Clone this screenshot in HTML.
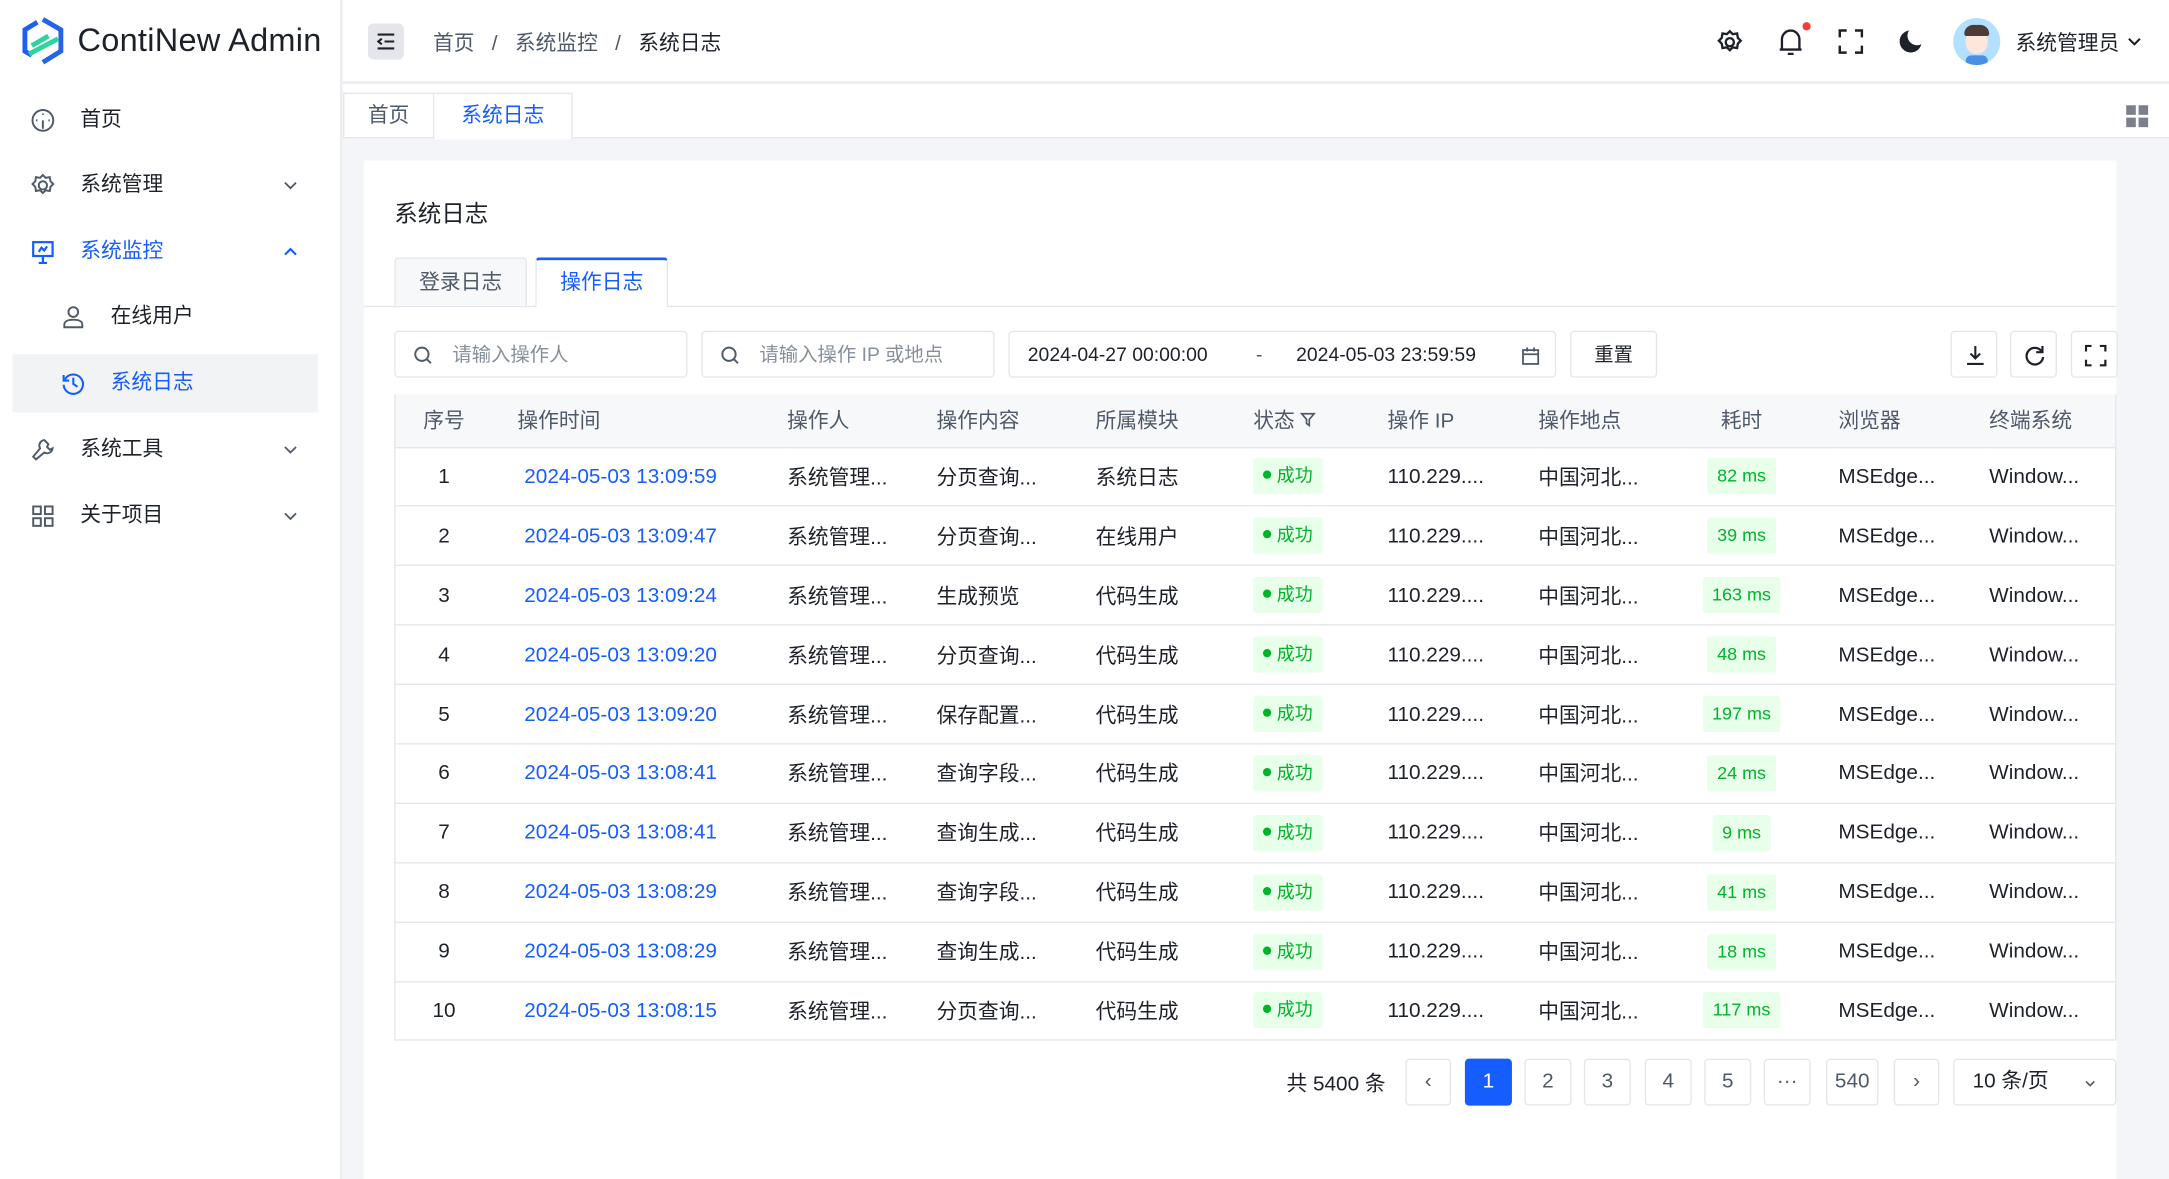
<!DOCTYPE html>
<html><head><meta charset="utf-8">
<style>
*{box-sizing:border-box;margin:0;padding:0}
html,body{width:2169px;height:1179px;overflow:hidden;background:#fff}
body{font-family:"Liberation Sans","Noto Sans CJK SC",sans-serif;color:#1d2129}
#w{position:absolute;left:0;top:0;width:1568px;height:852px;transform:scale(1.38329,1.3838);transform-origin:0 0;background:#f4f5f9;overflow:hidden}
.a{position:absolute}
.side{left:0;top:0;width:247px;height:852px;background:#fff;border-right:1px solid #e5e6eb}
.mi{position:absolute;left:9px;width:221px;height:42px;font-size:15px;color:#1d2129;line-height:42px}
.mi .t{position:absolute;left:49px}
.mi svg{position:absolute;left:13px;top:12px}
.mi svg.ch{left:auto;right:14px;top:15px}
.hdr{left:248px;top:0;width:1320px;height:60px;background:#fff;border-bottom:1px solid #e5e6eb}
.tabs{left:248px;top:61px;width:1320px;height:39px;background:#fff;border-bottom:1px solid #e5e6eb}
.card{left:263px;top:116px;width:1267px;height:740px;background:#fff}
.inp{position:absolute;top:239px;height:34px;border:1px solid #e5e6eb;border-radius:3px;font-size:14px;line-height:32px;background:#fff}
.btn{position:absolute;top:239px;width:34px;height:34px;border:1px solid #e5e6eb;border-radius:3px;background:#fff}
.btn svg{position:absolute;left:9px;top:9px}
table{position:absolute;left:285px;top:285px;width:1245px;border-collapse:collapse;font-size:15px}
th{height:38px;background:#f7f8fa;font-weight:normal;color:#4e5969;text-align:left;border-bottom:1px solid #e5e6eb}
td{height:42.9px;border-bottom:1px solid #e5e6eb;white-space:nowrap}
tr td:first-child,tr th:first-child{text-align:center}
.bl{color:#165dff}
.tag{display:inline-block;background:#e8ffea;color:#00b42a;font-size:13px;height:26px;line-height:26px;padding:0 7px;border-radius:2px}
.tag i{display:inline-block;width:6px;height:6px;border-radius:50%;background:#00b42a;margin-right:4px;vertical-align:2px}
.pg{position:absolute;top:765px;height:34px;border:1px solid #e5e6eb;border-radius:3px;text-align:center;line-height:32px;font-size:15px;color:#4e5969;background:#fff}
</style></head><body>
<div id="w">
<div class="a side">
  <svg class="a" style="left:15px;top:12px" width="32" height="36" viewBox="0 0 32 36"><path d="M16 2 L29 9.5 V25 L16 33" fill="none" stroke="#2563eb" stroke-width="3.5"/><path d="M12 4 L3 9.5 V25 L8 28" fill="none" stroke="#1e5ef0" stroke-width="3.5"/><path d="M6 27 L27 16" stroke="#2dd4a0" stroke-width="3.5"/><path d="M8 21 L20 14" stroke="#2dd4a0" stroke-width="3.5"/></svg>
  <div class="a" style="left:56px;top:16px;font-size:23.5px;color:#1d2129;letter-spacing:0.2px">ContiNew Admin</div>
  <div class="mi" style="top:66px"><svg width="18" height="18" viewBox="0 0 18 18" fill="none" stroke="#4e5969" stroke-width="1.4"><circle cx="9" cy="9" r="7.5"/><path d="M9 9 L9 15 M9 4v1 M4 9h1 M13 9h1"/></svg><span class="t">首页</span></div>
  <div class="mi" style="top:113px"><svg width="18" height="18" viewBox="0 0 18 18" fill="none" stroke="#4e5969" stroke-width="1.4"><circle cx="9" cy="9" r="3"/><path d="M9 1.5l2 2 3 -.5.5 3 2 2-2 2-.5 3-3-.5-2 2-2-2-3 .5-.5-3-2-2 2-2 .5-3 3 .5z"/></svg><span class="t">系统管理</span><svg class="ch" width="12" height="12" viewBox="0 0 12 12"><path d="M2 4l4 4 4-4" fill="none" stroke="#4e5969" stroke-width="1.3"/></svg></div>
  <div class="mi" style="top:161px;color:#165dff"><svg width="18" height="18" viewBox="0 0 18 18" fill="none" stroke="#165dff" stroke-width="1.6"><rect x="2" y="2" width="14" height="10"/><path d="M9 12v5M6 17h6M6 9l2-3 2 2 2-3"/></svg><span class="t">系统监控</span><svg class="ch" width="12" height="12" viewBox="0 0 12 12"><path d="M2 8l4-4 4 4" fill="none" stroke="#165dff" stroke-width="1.5"/></svg></div>
  <div class="mi" style="top:208px"><svg style="left:35px" width="18" height="18" viewBox="0 0 18 18" fill="none" stroke="#4e5969" stroke-width="1.4"><circle cx="9" cy="5.5" r="3.5"/><path d="M2.5 16.5v-2c0-2 2-3.5 6.5-3.5s6.5 1.5 6.5 3.5v2z"/></svg><span class="t" style="left:71px">在线用户</span></div>
  <div class="mi" style="top:256px;background:#f2f3f5;color:#165dff"><svg style="left:35px" width="18" height="18" viewBox="0 0 18 18" fill="none" stroke="#165dff" stroke-width="1.5"><path d="M3 6a7 7 0 1 1 -1 4"/><path d="M2 3v4h4"/><path d="M9 5v4.5l3 2"/></svg><span class="t" style="left:71px">系统日志</span></div>
  <div class="mi" style="top:304px"><svg width="18" height="18" viewBox="0 0 18 18" fill="none" stroke="#4e5969" stroke-width="1.4"><path d="M10 2a4 4 0 0 0 -3 6l-5 6 2 2 6-5a4 4 0 0 0 6-3l-2 1-2-2 1-2z"/></svg><span class="t">系统工具</span><svg class="ch" width="12" height="12" viewBox="0 0 12 12"><path d="M2 4l4 4 4-4" fill="none" stroke="#4e5969" stroke-width="1.3"/></svg></div>
  <div class="mi" style="top:352px"><svg width="18" height="18" viewBox="0 0 18 18" fill="none" stroke="#4e5969" stroke-width="1.4"><rect x="2" y="2" width="5.5" height="5.5"/><rect x="10.5" y="2" width="5.5" height="5.5"/><rect x="2" y="10.5" width="5.5" height="5.5"/><rect x="10.5" y="10.5" width="5.5" height="5.5"/></svg><span class="t">关于项目</span><svg class="ch" width="12" height="12" viewBox="0 0 12 12"><path d="M2 4l4 4 4-4" fill="none" stroke="#4e5969" stroke-width="1.3"/></svg></div>
</div>
<div class="a hdr">
  <div class="a" style="left:18px;top:17px;width:26px;height:26px;background:#e5e6eb;border-radius:4px"><svg style="position:absolute;left:6px;top:7px" width="14" height="12" viewBox="0 0 14 12" fill="none" stroke="#1d2129" stroke-width="1.5"><path d="M1 1h12M6 6h7M1 11h12M4 4L1.5 6 4 8"/></svg></div>
  <div class="a" style="left:65px;top:20px;font-size:15px;color:#4e5969">首页&nbsp;&nbsp;&nbsp;/&nbsp;&nbsp;&nbsp;系统监控&nbsp;&nbsp;&nbsp;/&nbsp;&nbsp;&nbsp;<span style="color:#1d2129">系统日志</span></div>
  <svg class="a" style="left:993px;top:21px" width="19" height="19" viewBox="0 0 18 18" fill="none" stroke="#1d2129" stroke-width="1.6"><circle cx="9" cy="9" r="2.8"/><path d="M9 1.5l2 2 3 -.5.5 3 2 2-2 2-.5 3-3-.5-2 2-2-2-3 .5-.5-3-2-2 2-2 .5-3 3 .5z"/></svg>
  <svg class="a" style="left:1037px;top:20px" width="19" height="20" viewBox="0 0 18 19" fill="none" stroke="#1d2129" stroke-width="1.6"><path d="M3 15V8a6 6 0 0 1 12 0v7M1.5 15h15M7 18h4"/></svg>
  <div class="a" style="left:1055px;top:16px;width:6px;height:6px;border-radius:50%;background:#f53f3f"></div>
  <svg class="a" style="left:1081px;top:21px" width="18" height="18" viewBox="0 0 18 18" fill="none" stroke="#1d2129" stroke-width="1.8"><path d="M1 6V1h5M12 1h5v5M17 12v5h-5M6 17H1v-5"/></svg>
  <svg class="a" style="left:1124px;top:21px" width="18" height="18" viewBox="0 0 18 18"><path d="M8 1a8 8 0 1 0 9 10A7 7 0 0 1 8 1z" fill="#1d2129"/></svg>
  <div class="a" style="left:1164px;top:13px;width:34px;height:34px;border-radius:50%;background:#b3e0ff;overflow:hidden"><div style="position:absolute;left:9px;top:8px;width:16px;height:18px;border-radius:8px;background:#fde7dc"></div><div style="position:absolute;left:8px;top:5px;width:18px;height:8px;border-radius:8px 8px 2px 2px;background:#4d3a3a"></div><div style="position:absolute;left:9px;top:27px;width:16px;height:8px;background:#4a90e2;border-radius:4px"></div></div>
  <div class="a" style="left:1209px;top:20px;font-size:15px">系统管理员</div>
  <svg class="a" style="left:1289px;top:24px" width="12" height="12" viewBox="0 0 12 12"><path d="M2 4l4 4 4-4" fill="none" stroke="#1d2129" stroke-width="1.5"/></svg>
</div>
<div class="a tabs">
  <div class="a" style="left:0;top:6px;width:66px;height:33px;border:1px solid #e5e6eb;border-bottom:0;font-size:15px;text-align:center;line-height:32px;color:#4e5969">首页</div>
  <div class="a" style="left:66px;top:6px;width:100px;height:34px;border:1px solid #e5e6eb;border-bottom:0;border-left:0;font-size:15px;text-align:center;line-height:32px;color:#165dff;background:#fff">系统日志</div>
  <svg class="a" style="left:1289px;top:15px" width="16" height="16" viewBox="0 0 16 16" fill="#7a808c"><rect x="0" y="0" width="7" height="7"/><rect x="9" y="0" width="7" height="7"/><rect x="0" y="9" width="7" height="7"/><rect x="9" y="9" width="7" height="7"/></svg>
</div>
<div class="a card"></div>
<div class="a" style="left:285px;top:140px;font-size:17px">系统日志</div>
<div class="a" style="left:263px;top:221px;width:1267px;height:1px;background:#e5e6eb"></div>
<div class="a" style="left:285px;top:186px;width:96px;height:35px;background:#f7f8fa;border:1px solid #e5e6eb;border-bottom:0;border-radius:3px 3px 0 0;text-align:center;line-height:36px;font-size:15px;color:#4e5969">登录日志</div>
<div class="a" style="left:387px;top:186px;width:96px;height:36px;background:#fff;border:1px solid #e5e6eb;border-top:2px solid #165dff;border-bottom:0;border-radius:3px 3px 0 0;text-align:center;line-height:34px;font-size:15px;color:#165dff">操作日志</div>
<div class="inp" style="left:285px;width:212px;color:#86909c"><svg class="a" style="left:13px;top:10px" width="14" height="14" viewBox="0 0 14 14" fill="none" stroke="#4e5969" stroke-width="1.4"><circle cx="6" cy="6" r="4.8"/><path d="M9.5 9.5l3 3"/></svg><span class="a" style="left:41px">请输入操作人</span></div>
<div class="inp" style="left:507px;width:212px;color:#86909c"><svg class="a" style="left:13px;top:10px" width="14" height="14" viewBox="0 0 14 14" fill="none" stroke="#4e5969" stroke-width="1.4"><circle cx="6" cy="6" r="4.8"/><path d="M9.5 9.5l3 3"/></svg><span class="a" style="left:41px">请输入操作 IP 或地点</span></div>
<div class="inp" style="left:729px;width:396px"><span class="a" style="left:13px">2024-04-27 00:00:00</span><span class="a" style="left:178px;color:#4e5969">-</span><span class="a" style="left:207px">2024-05-03 23:59:59</span><svg class="a" style="left:370px;top:11px" width="13" height="13" viewBox="0 0 13 13" fill="none" stroke="#4e5969" stroke-width="1.3"><rect x="1" y="2" width="11" height="10"/><path d="M1 5h11M4 0v3M9 0v3"/></svg></div>
<div class="inp" style="left:1135px;width:63px;text-align:center">重置</div>
<div class="btn" style="left:1410px"><svg width="16" height="16" viewBox="0 0 16 16" fill="none" stroke="#1d2129" stroke-width="1.5"><path d="M8 1v9M4.5 6.5L8 10l3.5-3.5M2 14h12"/></svg></div>
<div class="btn" style="left:1453px"><svg width="16" height="16" viewBox="0 0 16 16" fill="none" stroke="#1d2129" stroke-width="1.6"><path d="M13 5a6 6 0 1 0 1 4"/><path d="M13.5 1v4.5H9"/></svg></div>
<div class="btn" style="left:1497px"><svg width="16" height="16" viewBox="0 0 16 16" fill="none" stroke="#1d2129" stroke-width="1.6"><path d="M1 5V1h4M11 1h4v4M15 11v4h-4M5 15H1v-4"/></svg></div>
<table>
<colgroup><col style="width:72px"><col style="width:212px"><col style="width:108px"><col style="width:115px"><col style="width:114px"><col style="width:97px"><col style="width:109px"><col style="width:107px"><col style="width:110px"><col style="width:109px"><col></colgroup>
<tr><th>序号</th><th style="padding-left:17px">操作时间</th><th>操作人</th><th>操作内容</th><th>所属模块</th><th>状态 <svg width="11" height="11" viewBox="0 0 11 11" fill="none" stroke="#4e5969" stroke-width="1.2"><path d="M1 1h9L6.5 5v4.5L4.5 8V5z"/></svg></th><th>操作 IP</th><th>操作地点</th><th style="text-align:center;padding-right:30px">耗时</th><th>浏览器</th><th>终端系统</th></tr>
<tr><td>1</td><td class="bl" style="padding-left:22px">2024-05-03 13:09:59</td><td>系统管理...</td><td>分页查询...</td><td>系统日志</td><td><span class="tag"><i></i>成功</span></td><td>110.229....</td><td>中国河北...</td><td style="text-align:center;padding-right:30px"><span class="tag">82 ms</span></td><td>MSEdge...</td><td>Window...</td></tr>
<tr><td>2</td><td class="bl" style="padding-left:22px">2024-05-03 13:09:47</td><td>系统管理...</td><td>分页查询...</td><td>在线用户</td><td><span class="tag"><i></i>成功</span></td><td>110.229....</td><td>中国河北...</td><td style="text-align:center;padding-right:30px"><span class="tag">39 ms</span></td><td>MSEdge...</td><td>Window...</td></tr>
<tr><td>3</td><td class="bl" style="padding-left:22px">2024-05-03 13:09:24</td><td>系统管理...</td><td>生成预览</td><td>代码生成</td><td><span class="tag"><i></i>成功</span></td><td>110.229....</td><td>中国河北...</td><td style="text-align:center;padding-right:30px"><span class="tag">163 ms</span></td><td>MSEdge...</td><td>Window...</td></tr>
<tr><td>4</td><td class="bl" style="padding-left:22px">2024-05-03 13:09:20</td><td>系统管理...</td><td>分页查询...</td><td>代码生成</td><td><span class="tag"><i></i>成功</span></td><td>110.229....</td><td>中国河北...</td><td style="text-align:center;padding-right:30px"><span class="tag">48 ms</span></td><td>MSEdge...</td><td>Window...</td></tr>
<tr><td>5</td><td class="bl" style="padding-left:22px">2024-05-03 13:09:20</td><td>系统管理...</td><td>保存配置...</td><td>代码生成</td><td><span class="tag"><i></i>成功</span></td><td>110.229....</td><td>中国河北...</td><td style="text-align:center;padding-right:30px"><span class="tag">197 ms</span></td><td>MSEdge...</td><td>Window...</td></tr>
<tr><td>6</td><td class="bl" style="padding-left:22px">2024-05-03 13:08:41</td><td>系统管理...</td><td>查询字段...</td><td>代码生成</td><td><span class="tag"><i></i>成功</span></td><td>110.229....</td><td>中国河北...</td><td style="text-align:center;padding-right:30px"><span class="tag">24 ms</span></td><td>MSEdge...</td><td>Window...</td></tr>
<tr><td>7</td><td class="bl" style="padding-left:22px">2024-05-03 13:08:41</td><td>系统管理...</td><td>查询生成...</td><td>代码生成</td><td><span class="tag"><i></i>成功</span></td><td>110.229....</td><td>中国河北...</td><td style="text-align:center;padding-right:30px"><span class="tag">9 ms</span></td><td>MSEdge...</td><td>Window...</td></tr>
<tr><td>8</td><td class="bl" style="padding-left:22px">2024-05-03 13:08:29</td><td>系统管理...</td><td>查询字段...</td><td>代码生成</td><td><span class="tag"><i></i>成功</span></td><td>110.229....</td><td>中国河北...</td><td style="text-align:center;padding-right:30px"><span class="tag">41 ms</span></td><td>MSEdge...</td><td>Window...</td></tr>
<tr><td>9</td><td class="bl" style="padding-left:22px">2024-05-03 13:08:29</td><td>系统管理...</td><td>查询生成...</td><td>代码生成</td><td><span class="tag"><i></i>成功</span></td><td>110.229....</td><td>中国河北...</td><td style="text-align:center;padding-right:30px"><span class="tag">18 ms</span></td><td>MSEdge...</td><td>Window...</td></tr>
<tr><td>10</td><td class="bl" style="padding-left:22px">2024-05-03 13:08:15</td><td>系统管理...</td><td>分页查询...</td><td>代码生成</td><td><span class="tag"><i></i>成功</span></td><td>110.229....</td><td>中国河北...</td><td style="text-align:center;padding-right:30px"><span class="tag">117 ms</span></td><td>MSEdge...</td><td>Window...</td></tr>
</table>
<div class="a" style="left:285px;top:285px;width:1px;height:466px;background:#e5e6eb"></div>
<div class="a" style="left:1529px;top:285px;width:1px;height:466px;background:#e5e6eb"></div>
<div class="a" style="left:930px;top:772px;font-size:15px">共 5400 条</div>
<div class="pg" style="left:1016px;width:33px">‹</div>
<div class="pg" style="left:1059px;width:34px;background:#165dff;border-color:#165dff;color:#fff">1</div>
<div class="pg" style="left:1102px;width:34px">2</div>
<div class="pg" style="left:1145px;width:34px">3</div>
<div class="pg" style="left:1189px;width:34px">4</div>
<div class="pg" style="left:1232px;width:34px">5</div>
<div class="pg" style="left:1275px;width:34px">···</div>
<div class="pg" style="left:1320px;width:38px">540</div>
<div class="pg" style="left:1369px;width:33px">›</div>
<div class="pg" style="left:1412px;width:118px;text-align:left;padding-left:13px;color:#1d2129">10 条/页<svg style="position:absolute;right:13px;top:12px" width="10" height="10" viewBox="0 0 10 10"><path d="M2 3.5l3 3 3-3" fill="none" stroke="#4e5969" stroke-width="1.2"/></svg></div>
</div>
</body></html>
